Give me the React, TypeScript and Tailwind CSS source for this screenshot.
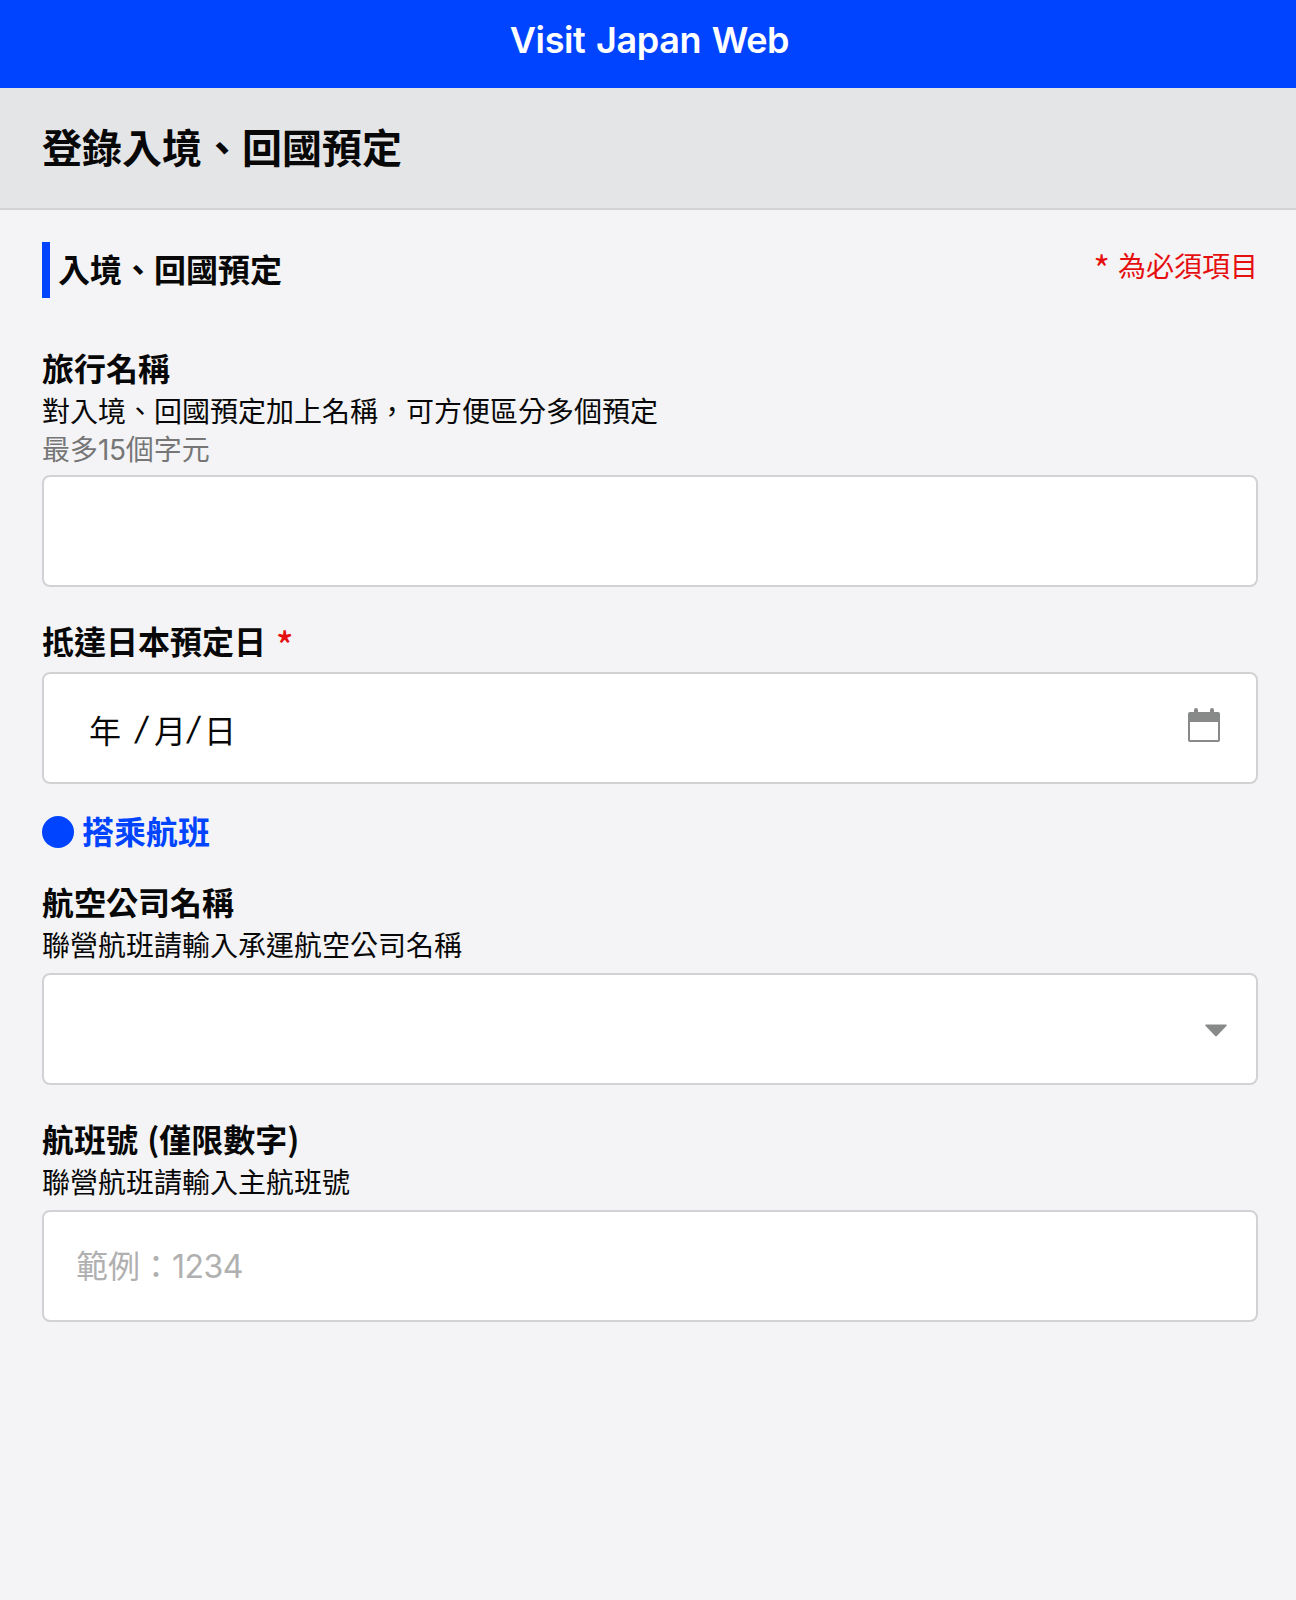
import type { ReactNode } from 'react';

interface FieldProps {
  label: string;
  required?: boolean;
  description?: string;
  note?: ReactNode;
  className?: string;
  children: ReactNode;
}

function Field({ label, required, description, note, className, children }: FieldProps) {
  return (
    <div className={className}>
      <h3 className="text-[32px] leading-[47px] font-bold [word-spacing:2px]">
        {label}
        {required && (
          <span className="ml-2.5 inline-block translate-y-[5px] text-[36px] leading-none font-medium text-[#e60f0f]">
            *
          </span>
        )}
      </h3>
      {description && <p className="text-[28px] leading-[38px]">{description}</p>}
      {note && <p className="text-[28px] leading-[38px] text-[#767676]">{note}</p>}
      {children}
    </div>
  );
}

function DateSlash() {
  return (
    <span className="inline-block w-[18px] -skew-x-10 font-['Inter',sans-serif]">/</span>
  );
}

function CalendarIcon() {
  return (
    <svg className="w-8 h-[34px]" viewBox="0 0 32 34" fill="none">
      <path d="M6 5V2a2 2 0 0 1 4 0v3zM22 5V2a2 2 0 0 1 4 0v3z" fill="#888a89" />
      <rect x="1" y="5" width="30" height="28" rx="1" stroke="#888a89" strokeWidth="2" />
      <path d="M1 5h30v9H1z" fill="#888a89" />
    </svg>
  );
}

export default function App() {
  return (
    <div className="min-h-[1600px] bg-[#f4f4f6] text-[#080808] font-['Noto_Sans_CJK_TC',sans-serif]">
      <header className="h-[88px] bg-[#0044ff] pt-[18px] text-center">
        <h1 className="pl-[3px] font-['Inter','Noto_Sans_CJK_TC',sans-serif] text-[36px] leading-[44px] font-semibold tracking-[-0.4px] [word-spacing:2px] text-white">
          Visit Japan Web
        </h1>
      </header>

      <div className="h-[122px] border-b-2 border-[#d1d2d4] bg-[#e4e5e7] px-[42px] pt-7">
        <h2 className="text-[40px] leading-[60px] font-bold">登錄入境、回國預定</h2>
      </div>

      <main className="pl-[42px] pr-[38px] pt-8">
        <div className="flex items-start justify-between">
          <h3 className="h-14 border-l-8 border-[#0044ff] pl-2 text-[32px] leading-[52px] font-bold">
            入境、回國預定
          </h3>
          <p className="pt-px text-[28px] leading-10 text-[#e60f0f]">
            <span className="mr-2 inline-block translate-y-[6px] text-[36px] leading-none">*</span>
            為必須項目
          </p>
        </div>

        <Field
          className="mt-[46px]"
          label="旅行名稱"
          description="對入境、回國預定加上名稱，可方便區分多個預定"
          note={
            <>
              最多
              <span className="font-['Inter',sans-serif] tracking-[-0.3px]">15</span>
              個字元
            </>
          }
        >
          <div className="mt-1.5 h-28 rounded-lg border-2 border-[#d1d2d4] bg-white" />
        </Field>

        <Field className="mt-[30px]" label="抵達日本預定日" required>
          <div className="mt-2 flex h-28 items-center justify-between rounded-lg border-2 border-[#d1d2d4] bg-white pl-[45px] pr-9">
            <div className="flex items-center pt-0.5 text-[32px] leading-12">
              <span className="mr-[15px]">年</span>
              <DateSlash />
              <span className="mr-0.5">月</span>
              <DateSlash />
              <span className="-ml-0.5">日</span>
            </div>
            <div className="pb-1.5">
              <CalendarIcon />
            </div>
          </div>
        </Field>

        <div className="mt-6 flex h-12 items-center gap-2 text-[#0044ff]">
          <span className="size-8 rounded-full bg-[#0044ff]" />
          <h3 className="pb-1 text-[32px] leading-[44px] font-bold">搭乘航班</h3>
        </div>

        <Field className="mt-[22px]" label="航空公司名稱" description="聯營航班請輸入承運航空公司名稱">
          <div className="mt-2.5 flex h-28 items-center justify-end rounded-lg border-2 border-[#d1d2d4] bg-white pr-[29px]">
            <svg className="mt-[3px] w-[22px] h-[13px]" viewBox="0 0 22 13">
              <path d="M1 0.5h20q1.2.4.4 1.5L11.8 12q-.8.8-1.6 0L.6 2Q-.2.9 1 .5z" fill="#888a89" />
            </svg>
          </div>
        </Field>

        <Field className="mt-[30px]" label="航班號 (僅限數字)" description="聯營航班請輸入主航班號">
          <div className="mt-2.5 flex h-28 items-center rounded-lg border-2 border-[#d1d2d4] bg-white pl-8 pb-0.5 text-[32px] leading-12 text-[#b0b0b0]">
            <p>
              範例：
              <span className="font-['Inter',sans-serif] tracking-[-0.5px]">1234</span>
            </p>
          </div>
        </Field>
      </main>
    </div>
  );
}
